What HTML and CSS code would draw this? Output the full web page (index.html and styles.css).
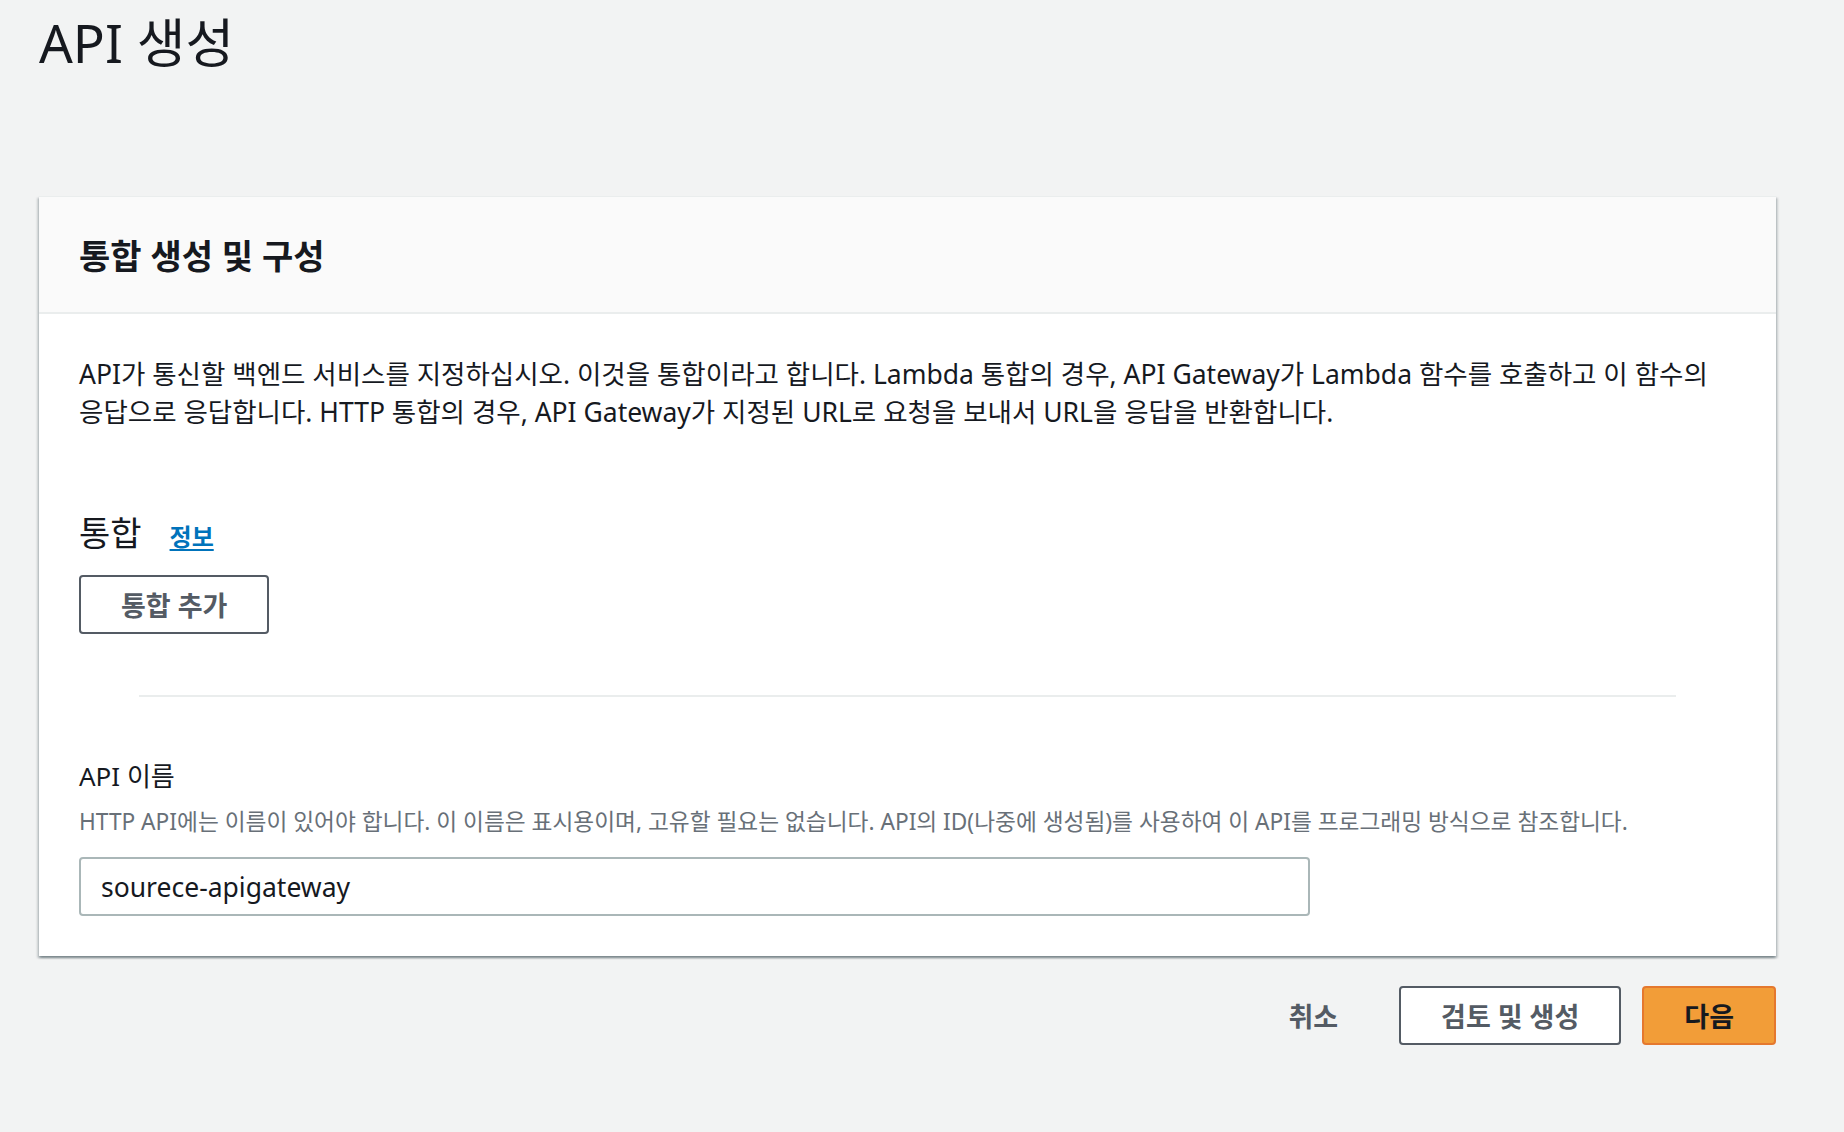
FILE: index.html
```html
<!DOCTYPE html>
<html lang="ko">
<head>
  <meta charset="UTF-8">
  <meta name="viewport" content="width=device-width, initial-scale=1.0">
  <title>API 생성</title>
  <link rel="stylesheet" href="styles.css">
</head>
<body>
  <h1 class="page-title">API 생성</h1>

  <div class="container">
    <div class="container-header">
      <h2>통합 생성 및 구성</h2>
    </div>
    <div class="container-body">
      <p class="desc">API가 통신할 백엔드 서비스를 지정하십시오. 이것을 통합이라고 합니다. Lambda 통합의 경우, API Gateway가 Lambda 함수를 호출하고 이 함수의 응답으로 응답합니다. HTTP 통합의 경우, API Gateway가 지정된 URL로 요청을 보내서 URL을 응답을 반환합니다.</p>

      <div class="integrations">
        <div class="section-title">
          <h3>통합</h3>
          <a href="#" class="info-link">정보</a>
        </div>
        <button class="btn btn-normal btn-add">통합 추가</button>
      </div>

      <hr class="divider">

      <div class="form-field">
        <label for="api-name">API 이름</label>
        <p class="hint">HTTP API에는 이름이 있어야 합니다. 이 이름은 표시용이며, 고유할 필요는 없습니다. API의 ID(나중에 생성됨)를 사용하여 이 API를 프로그래밍 방식으로 참조합니다.</p>
        <input type="text" id="api-name" value="sourece-apigateway">
      </div>
    </div>
  </div>

  <div class="actions">
    <button class="btn btn-link">취소</button>
    <button class="btn btn-normal">검토 및 생성</button>
    <button class="btn btn-primary">다음</button>
  </div>
</body>
</html>
```

FILE: styles.css
```css
* {
  box-sizing: border-box;
}
body {
  margin: 0;
  padding: 0 68px 0 39px;
  font-family: "Noto Sans", "Noto Sans CJK KR", sans-serif;
  background-color: #f2f3f3;
  color: #16191f;
  word-break: keep-all;
}
.page-title {
  margin: 11px 0 121px;
  font-size: 53px;
  line-height: 64px;
  font-weight: 400;
}
.container {
  background: #fff;
  border-top: 1px solid #eaeded;
  box-shadow: 0 2px 2px 0 rgba(0,28,36,0.3), 2px 2px 2px 0 rgba(0,28,36,0.15), -2px 2px 2px 0 rgba(0,28,36,0.15);
}
.container-header {
  height: 117px;
  padding: 0 40px;
  display: flex;
  align-items: center;
  background: #fafafa;
  border-bottom: 2px solid #eaeded;
}
.container-header h2 {
  margin: 0;
  font-size: 34px;
  font-weight: 700;
}
.container-body {
  padding: 41px 40px 40px;
}
.desc {
  margin: 0;
  font-size: 26.5px;
  line-height: 38px;
}
.integrations {
  margin-top: 80px;
}
.section-title {
  display: flex;
  align-items: baseline;
  gap: 28px;
}
.section-title h3 {
  margin: 0;
  font-size: 34px;
  line-height: 44px;
  font-weight: 400;
}
.info-link {
  font-size: 24px;
  font-weight: 700;
  color: #0073bb;
  text-decoration: underline;
  text-underline-offset: 3px;
}
.btn {
  height: 59px;
  padding: 0 40px;
  border-radius: 4px;
  font-family: inherit;
  font-size: 27px;
  font-weight: 700;
  cursor: pointer;
}
.btn-normal {
  background: #fff;
  color: #545b64;
  border: 2px solid #545b64;
}
.btn-add {
  margin-top: 20px;
}
.btn-link {
  background: none;
  border: none;
  color: #545b64;
}
.btn-primary {
  background: #f29d38;
  color: #16191f;
  border: 2px solid #e5782e;
}
.divider {
  margin: 61px 60px 0;
  border: none;
  border-top: 2px solid #eaeded;
}
.form-field {
  margin-top: 60px;
}
.form-field label {
  display: block;
  font-size: 26px;
  line-height: 38px;
}
.hint {
  margin: 11px 0 0;
  font-size: 22.7px;
  line-height: 32px;
  color: #687078;
}
.form-field input {
  display: block;
  margin-top: 19px;
  width: 1231px;
  height: 59px;
  padding: 0 20px;
  border: 2px solid #aab7b8;
  border-radius: 4px;
  font-family: inherit;
  font-size: 26.5px;
  color: #16191f;
}
.actions {
  display: flex;
  justify-content: flex-end;
  align-items: center;
  gap: 21px;
  margin-top: 30px;
}
```
